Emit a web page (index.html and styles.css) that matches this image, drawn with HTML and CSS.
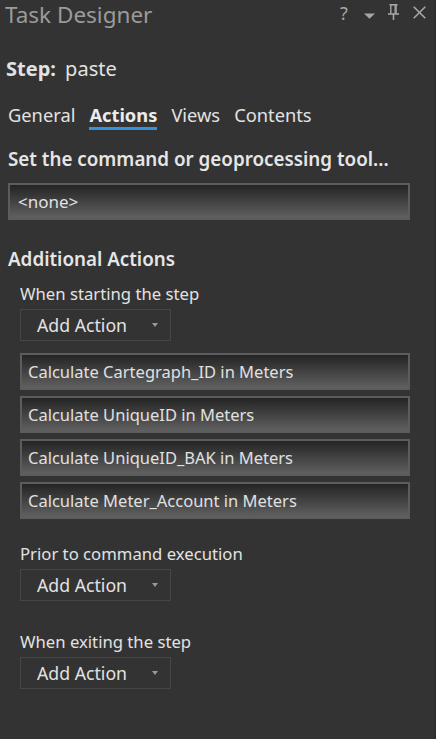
FILE: index.html
```html
<!DOCTYPE html>
<html lang="en">
<head>
    <meta charset="UTF-8">
    <meta name="viewport" content="width=device-width, initial-scale=1.0">
    <title>Task Designer</title>
    <link rel="stylesheet" href="styles.css">
</head>
<body>
    <div class="pane">
        <header class="pane-header">
            <h1 class="pane-title">Task Designer</h1>
            <div class="pane-tools">
                <span class="tool-help">?</span>
                <!-- options -->
                <svg class="tool-menu" width="11" height="6" viewBox="0 0 11 6">
                    <path d="M0 0.5 H11 L5.5 5.8 Z" fill="#a6a6a6"/>
                </svg>
                <!-- auto hide -->
                <svg class="tool-pin" width="11" height="16" viewBox="0 0 11 16">
                    <path d="M1.5 0.8 H9.5" stroke="#a6a6a6" stroke-width="1.6"/>
                    <path d="M2.8 1 V9.5 M7.2 1 V9.5" stroke="#a6a6a6" stroke-width="1.4"/>
                    <path d="M8.2 1 V9.5" stroke="#a6a6a6" stroke-width="1.2"/>
                    <path d="M0 10 H11" stroke="#a6a6a6" stroke-width="1.6"/>
                    <path d="M5.5 10 V16" stroke="#a6a6a6" stroke-width="1.6"/>
                </svg>
                <!-- close -->
                <svg class="tool-close" width="13" height="13" viewBox="0 0 13 13">
                    <path d="M0.7 0.7 L12.3 12.3 M12.3 0.7 L0.7 12.3" stroke="#a6a6a6" stroke-width="1.6"/>
                </svg>
            </div>
        </header>

        <div class="step-name">
            <b>Step:</b> <span>paste</span>
        </div>

        <nav class="tabs">
            <span class="tab">General</span>
            <span class="tab active">Actions</span>
            <span class="tab">Views</span>
            <span class="tab">Contents</span>
        </nav>

        <main class="content">
            <h2 class="section-title">Set the command or geoprocessing tool...</h2>
            <div class="field command-field">&lt;none&gt;</div>

            <h2 class="section-title additional">Additional Actions</h2>

            <div class="action-group">
                <div class="group-label">When starting the step</div>
                <div class="add-action">Add Action <span class="caret"></span></div>
                <div class="action-list">
                    <div class="field action-item">Calculate Cartegraph_ID in Meters</div>
                    <div class="field action-item">Calculate UniqueID in Meters</div>
                    <div class="field action-item">Calculate UniqueID_BAK in Meters</div>
                    <div class="field action-item">Calculate Meter_Account in Meters</div>
                </div>
            </div>

            <div class="action-group prior">
                <div class="group-label">Prior to command execution</div>
                <div class="add-action">Add Action <span class="caret"></span></div>
            </div>

            <div class="action-group exiting">
                <div class="group-label">When exiting the step</div>
                <div class="add-action">Add Action <span class="caret"></span></div>
            </div>
        </main>
    </div>
</body>
</html>
```

FILE: styles.css
```css
:root {
--bg: #333333;
--text: #e2e2e2;
--muted: #9b9b9b;
--accent: #3592dc;
--field-border: #5c5c5c;
}

*,
*::before,
*::after {
box-sizing: border-box;
}

body {
margin: 0;
background-color: var(--bg);
font-family: "Noto Sans", "Open Sans", sans-serif;
color: var(--text);
height: 739px;
overflow: hidden;
}

.pane {
height: 100%;
border-right: 2px solid #2c2c31;
}

/* title bar */
.pane-header {
display: flex;
align-items: flex-start;
justify-content: space-between;
height: 34px;
padding: 0 8px 0 5px;
}

.pane-title {
margin: 0;
font-size: 22.5px;
line-height: 30px;
font-weight: 400;
color: var(--muted);
}

.pane-tools {
display: flex;
align-items: flex-start;
padding-top: 4px;
}

.tool-help {
width: 10px;
font-size: 18px;
line-height: 18px;
color: #a6a6a6;
}

.tool-menu {
margin: 9px 0 0 14px;
}

.tool-pin {
margin: 0 0 0 13px;
}

.tool-close {
margin: 2px 0 0 14px;
}

/* step + tabs */
.step-name {
margin-top: 23px;
padding: 0 6px;
font-size: 20px;
line-height: 24px;
}

.step-name b {
font-weight: 700;
margin-right: 4px;
}

.tabs {
display: flex;
gap: 14px;
margin-top: 23px;
padding: 0 8px;
font-size: 18.3px;
line-height: 22px;
}

.tab {
padding-bottom: 1px;
border-bottom: 3px solid transparent;
}

.tab.active {
font-weight: 700;
color: #ececec;
border-bottom-color: var(--accent);
}

/* panel body */
.content {
padding: 17px 24px 0 8px;
}

.section-title {
margin: 0;
font-size: 18.8px;
line-height: 24px;
font-weight: 600;
color: #e6e6e6;
}

.field {
border: 2px solid var(--field-border);
background: linear-gradient(to bottom, #242424, #606060);
color: #e0e0e0;
display: flex;
align-items: center;
}

.command-field {
height: 37px;
margin-top: 12px;
padding-left: 8px;
font-size: 17px;
}

.additional {
margin-top: 27px;
}

.action-group {
padding-left: 12px;
margin-top: 12px;
}

.action-group.prior {
margin-top: 24px;
}

.action-group.exiting {
margin-top: 30px;
}

.group-label {
font-size: 16.7px;
line-height: 22px;
}

.add-action {
display: flex;
align-items: center;
width: 151px;
height: 32px;
margin-top: 4px;
padding-left: 16px;
border: 1px solid #464646;
font-size: 17.7px;
}

.caret {
width: 0;
height: 0;
margin-left: auto;
margin-right: 12px;
border-left: 3px solid transparent;
border-right: 3px solid transparent;
border-top: 4px solid #9a9a9a;
}

.action-list {
display: flex;
flex-direction: column;
gap: 6px;
margin-top: 12px;
}

.action-item {
height: 37px;
padding-left: 6px;
font-size: 16.5px;
}
```
